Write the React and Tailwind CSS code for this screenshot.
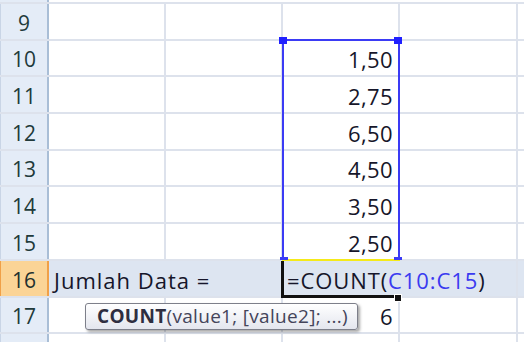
import React from 'react';

const rows = [
  { n: 9, h: 'h-[37px]' },
  { n: 10, h: 'h-[36px]', c: '1,50' },
  { n: 11, h: 'h-[37px]', c: '2,75' },
  { n: 12, h: 'h-[37px]', c: '6,50' },
  { n: 13, h: 'h-[36px]', c: '4,50' },
  { n: 14, h: 'h-[37px]', c: '3,50' },
  { n: 15, h: 'h-[37px]', c: '2,50' },
  { n: 16, h: 'h-[37px]', active: true },
  { n: 17, h: 'h-[36px]', c: '6' },
  { n: 18, h: 'h-[12px]' },
];

function Row({ row }) {
  const { n, h, c, active } = row;
  const line = active ? 'border-[#dde5f1]' : 'border-[#dde2ec]';
  return (
    <div className={`flex ${h} border-t-2 border-[#dde2ec] ${active ? 'bg-[#dde5f1]' : 'bg-white'}`}>
      {/* row header */}
      <div
        className={`w-[49px] shrink-0 flex items-end justify-center pb-[5px] border-r-2 border-l leading-none text-[21px] ${
          active
            ? 'bg-[#fbd496] border-r-[#f0a048] border-l-[#f0a048] text-[#22302f]'
            : 'bg-[#e4ecf7] border-r-[#a9bed6] border-l-[#c9d5e6] text-[#213a3a]'
        }`}
      >
        {n !== 18 && n}
      </div>
      {/* A */}
      <div className={`w-[117px] shrink-0 border-r-2 ${line} flex items-end pl-[5px] pb-[5px] leading-none text-[22px] tracking-[1px] text-[#16162a] whitespace-nowrap`}>
        {active && <span>Jumlah Data =</span>}
      </div>
      {/* B */}
      <div className={`w-[117px] shrink-0 border-r-2 ${line}`}></div>
      {/* C */}
      <div className={`w-[117px] shrink-0 border-r-2 ${line} flex items-end pb-[5px] leading-none text-[22px] text-[#16162a] whitespace-nowrap ${active ? 'justify-start pl-[4px] tracking-[0.9px]' : 'justify-end pr-[5px] tracking-[0.4px]'}`}>
        {c && <span>{c}</span>}
        {active && (
          <span>
            =COUNT(<span className="text-[#3a3af0]">C10:C15</span>)
          </span>
        )}
      </div>
      {/* D */}
      <div className="w-[118px] shrink-0 border-r-2 border-[#dde2ec]"></div>
      {/* E */}
      <div className="flex-1"></div>
    </div>
  );
}

export default function App() {
  return (
    <div className="relative w-[524px] h-[342px] overflow-hidden bg-white" style={{ fontFamily: '"Open Sans", "Liberation Sans", sans-serif' }}>
      <div className="flex h-[2px]">
        <div className="w-[49px] bg-[#e4ecf7] border-r-2 border-[#a9bed6]"></div>
      </div>
      {rows.map((r) => (
        <Row key={r.n} row={r} />
      ))}

      {/* selected range C10:C15 */}
      <div className="absolute left-[282px] top-[39px] w-[118px] h-[221px] border-x-2 border-t-2 border-[#3b3bf5]"></div>
      <div className="absolute left-[279px] top-[37px] w-[8px] h-[7px] bg-[#2020ff]"></div>
      <div className="absolute left-[394px] top-[37px] w-[8px] h-[7px] bg-[#2020ff]"></div>
      <div className="absolute left-[282px] top-[259px] w-[118px] h-[2px] bg-[#f5ea1a]"></div>
      <div className="absolute left-[280px] top-[257px] w-[8px] h-[3px] bg-[#3b3bf5]"></div>
      <div className="absolute left-[394px] top-[257px] w-[8px] h-[3px] bg-[#3b3bf5]"></div>

      {/* active cell C16 */}
      <div className="absolute left-[281px] top-[261px] w-[3px] h-[37px] bg-[#111]"></div>
      <div className="absolute left-[281px] top-[295px] w-[113px] h-[3px] bg-[#111]"></div>
      <div className="absolute left-[394px] top-[294px] w-[8px] h-[8px] bg-[#111] border border-white"></div>

      {/* function tooltip */}
      <div className="absolute left-[85px] top-[303px] w-[273px] h-[27px] rounded-[3px] border border-[#7d7f8a] bg-gradient-to-b from-white to-[#e4e6ee] shadow-[2px_2px_3px_rgba(0,0,0,0.35)] flex items-center pl-[11px] text-[19px] tracking-[0.3px] leading-none whitespace-nowrap">
        <span className="font-bold text-[#2e2e40]">COUNT</span>
        <span className="text-[#44445a]">(value1; [value2]; ...)</span>
      </div>
    </div>
  );
}
